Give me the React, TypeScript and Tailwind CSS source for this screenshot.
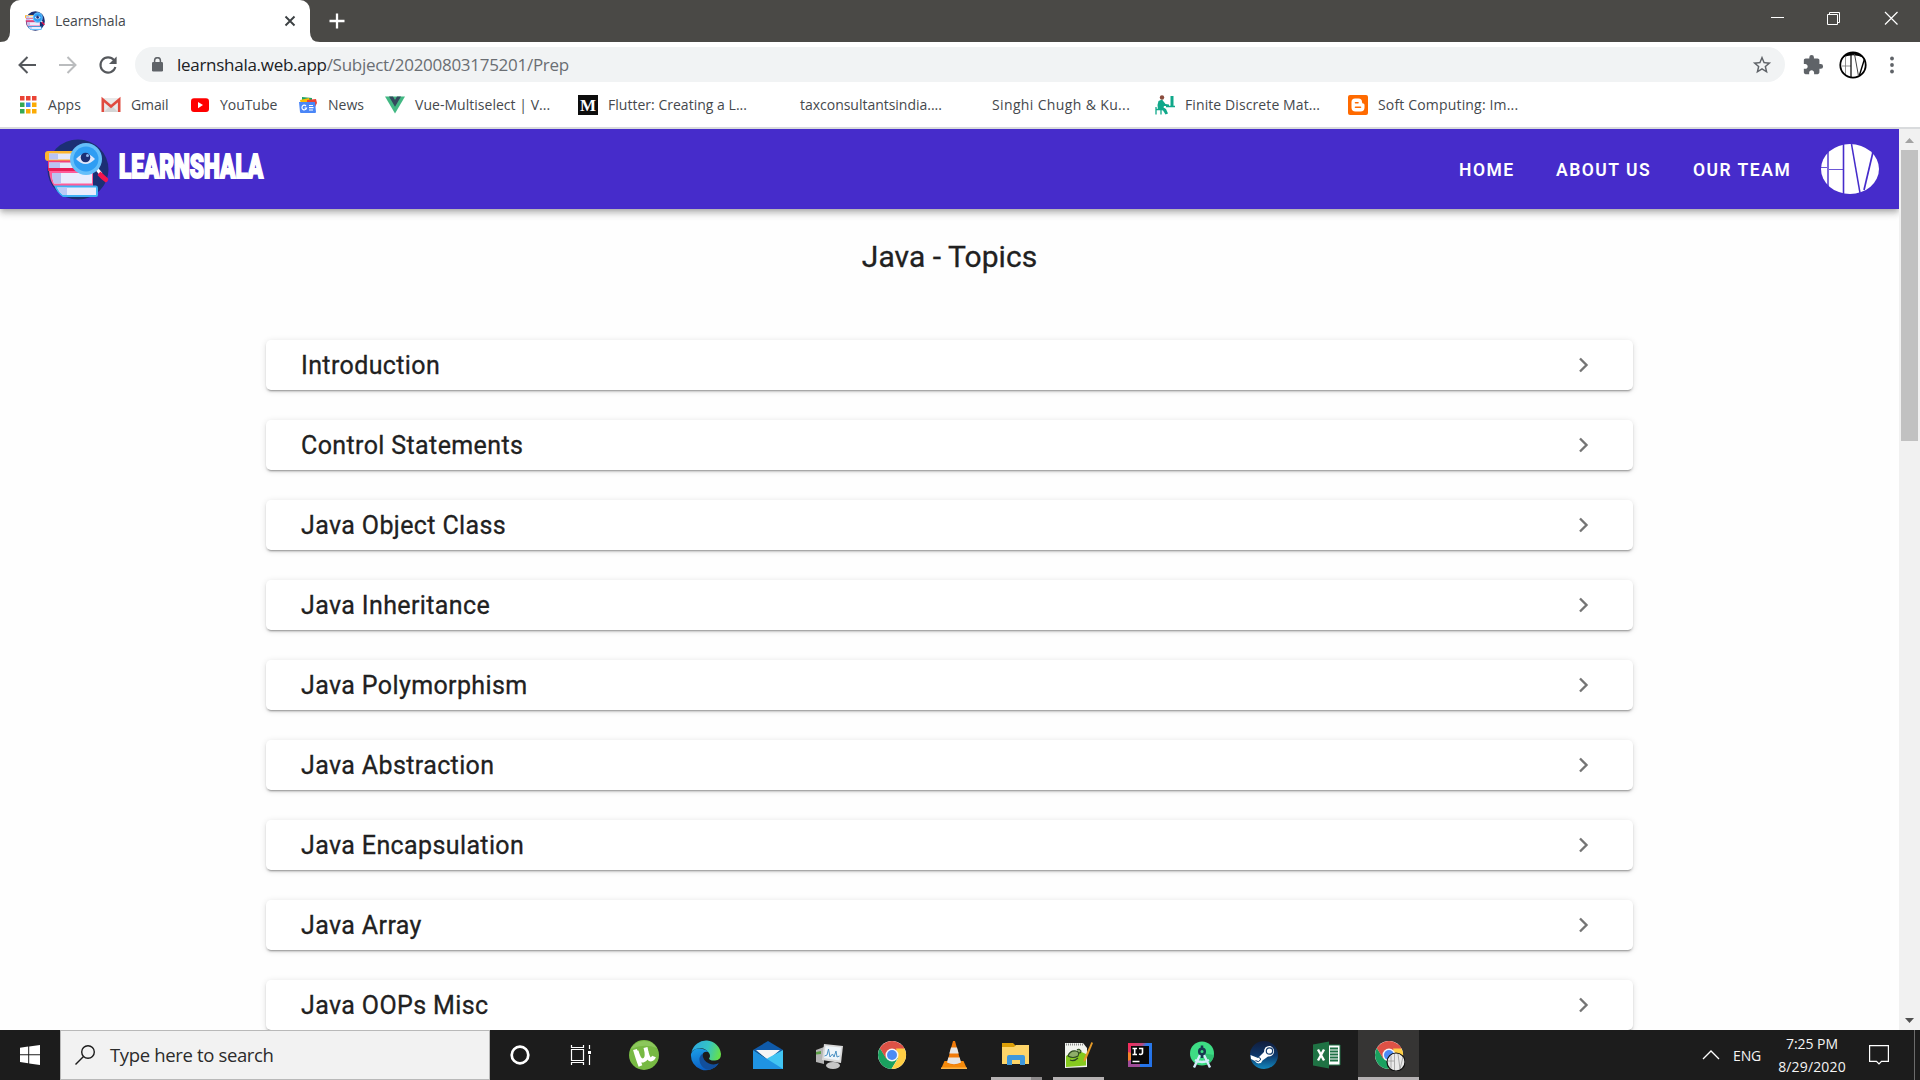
import React from "react";

const segoe = "font-['Open_Sans',sans-serif]";

function BookLogo({ className }: { className: string }) {
  return (
    <svg viewBox="0 0 64 61" className={className} preserveAspectRatio="none">
      <defs>
        <clipPath id="bookround">
          <path d="M0 10H30V58H16Q6 50 4 36L0 20Z M16 40H60V61H16Z" />
        </clipPath>
      </defs>
      <ellipse cx="33" cy="30.500" rx="30.500" ry="30" fill="#1c2f74" />
      <g clipPath="url(#bookround)">
        <rect x="0" y="12" width="32" height="10" rx="3" fill="#fdb62f" />
        <rect x="4" y="14.500" width="28" height="6" fill="#e4e9fb" />
        <rect x="4" y="14.500" width="9" height="6" fill="#b9c4f2" />
        <rect x="3" y="21.500" width="30" height="10" fill="#f2417d" />
        <rect x="4" y="23.500" width="30" height="5.500" fill="#e4e9fb" />
        <rect x="4" y="23.500" width="11" height="5.500" fill="#b9c4f2" />
        <rect x="3" y="29" width="36" height="3" fill="#e81e56" />
      </g>
      <path d="M4 32H48V47H9Q5 42 4 32Z" fill="#ff5c9a" />
      <path d="M7 34H47V44.500H9Q7 40 7 34Z" fill="#e9edfd" />
      <path d="M7 34H16V44.500H9Q7 40 7 34Z" fill="#b9c4f2" />
      <path d="M9 46.500H51Q53 46.500 53 49V56Q53 58 51 58H18Q12 54 9 46.500Z" fill="#3fb1f5" />
      <path d="M12 48.500H51V56H18Q14 53 12 48.500Z" fill="#e9edfd" />
      <path d="M12 48.500H22V56H18Q14 53 12 48.500Z" fill="#bccbf7" />
      <path d="M51 29L56 35" stroke="#fff" strokeWidth="3.500" />
      <path d="M55.500 33.500L62.500 40Q62 43 60.500 42.500Q56 39 53.500 36Z" fill="#f3164e" stroke="#f3164e" strokeWidth="1.500" />
      <circle cx="41" cy="20" r="16" fill="#65bffa" />
      <circle cx="41" cy="20" r="12.500" fill="#2f9df3" />
      <path d="M31 20Q40.500 9.500 50 20Q40.500 30 31 20Z" fill="#dfe7fb" />
      <circle cx="40.500" cy="18.500" r="4.800" fill="#1c2f74" />
      <circle cx="42.500" cy="16.500" r="1.500" fill="#8fb6ee" />
    </svg>
  );
}

const bookmarks = [
  { label: "Apps", w: "w-[83px]", t: "tracking-[0.1px]", icon: "apps" },
  { label: "Gmail", w: "w-[89px]", t: "tracking-[-0.1px]", icon: "gmail" },
  { label: "YouTube", w: "w-[108px]", t: "tracking-[-0.05px]", icon: "youtube" },
  { label: "News", w: "w-[87px]", t: "tracking-[0px]", icon: "news" },
  { label: "Vue-Multiselect | V...", w: "w-[193px]", t: "tracking-[0.03px]", icon: "vue" },
  { label: "Flutter: Creating a L...", w: "w-[192px]", t: "tracking-[0.02px]", icon: "medium" },
  { label: "taxconsultantsindia....", w: "w-[192px]", t: "tracking-[-0.02px]", icon: "" },
  { label: "Singhi Chugh & Ku...", w: "w-[193px]", t: "tracking-[0.36px]", icon: "" },
  { label: "Finite Discrete Mat...", w: "w-[193px]", t: "tracking-[0.1px]", icon: "finite" },
  { label: "Soft Computing: Im...", w: "w-[180px]", t: "tracking-[0.17px]", icon: "blogger" },
];

function BookmarkIcon({ name }: { name: string }) {
  const cls = "size-5 shrink-0";
  switch (name) {
    case "apps":
      return (
        <svg viewBox="0 0 20 20" className={cls}>
          {[2, 8, 14].map((x) => <rect key={x} x={x} y="1" width="4.500" height="4.500" fill="#ea4335" />)}
          <rect x="2" y="7.500" width="4.500" height="4.500" fill="#34a853" />
          <rect x="8" y="7.500" width="4.500" height="4.500" fill="#4285f4" />
          <rect x="14" y="7.500" width="4.500" height="4.500" fill="#fbab05" />
          <rect x="2" y="14" width="4.500" height="4.500" fill="#34a853" />
          <rect x="8" y="14" width="4.500" height="4.500" fill="#fbab05" />
          <rect x="14" y="14" width="4.500" height="4.500" fill="#fbab05" />
        </svg>
      );
    case "gmail":
      return (
        <svg viewBox="0 0 20 20" className={cls}>
          <rect x="1" y="3" width="18" height="14" rx="1.500" fill="#e9e9e9" />
          <path d="M3 17L10 10L17 17Z" fill="#d4d4d4" />
          <path d="M1.800 17V4.500L10 11.500L18.200 4.500V17" fill="none" stroke="#e04a3f" strokeWidth="2.600" />
        </svg>
      );
    case "youtube":
      return (
        <svg viewBox="0 0 20 20" className={cls}>
          <rect x="1" y="3.200" width="18" height="13.800" rx="3" fill="#f00" />
          <path d="M8 7L13 10.100L8 13.200Z" fill="#fff" />
        </svg>
      );
    case "news":
      return (
        <svg viewBox="0 0 20 20" className={cls}>
          <path d="M4 2L14 3V9H4Z" fill="#1fa463" />
          <path d="M2 5L11 3L13 9H3Z" fill="#fbbc04" />
          <path d="M9 5L18 4L19 8L17 12H9Z" fill="#ea4335" />
          <path d="M1 7H17L18 17Q18 18 17 18H3Q2 18 2 17Z" fill="#4a86f7" />
          <path d="M8 11A2.300 2.300 0 1 0 8.500 13H6.500M11 10.500H15M11 12.700H15.500M11 15H15" fill="none" stroke="#fff" strokeWidth="1.200" />
        </svg>
      );
    case "vue":
      return (
        <svg viewBox="0 0 20 20" className={cls}>
          <path d="M0 1.500H20L10 18.500Z" fill="#42b883" />
          <path d="M4 1.500H8L10 5L12 1.500H16L10 11.800Z" fill="#35495e" />
        </svg>
      );
    case "medium":
      return (
        <span className="flex size-5 shrink-0 items-center justify-center bg-[#0d0d0d] font-['Liberation_Serif',serif] text-[17px] leading-none font-bold text-white">
          M
        </span>
      );
    case "finite":
      return (
        <svg viewBox="0 0 20 20" className={cls}>
          <circle cx="7" cy="2.500" r="2.200" fill="#8a4b3c" />
          <path d="M3.500 6L7 4.500L10.500 9L14 9.500V11L9 11L8.500 12.500L11 14L13 18.500L10.500 19.500L8 15.500L3 14.500L2.500 10Z" fill="#10a88a" />
          <path d="M11 11.500H20M1 12V19.500M1 14.500H6V19.500" fill="none" stroke="#10a88a" strokeWidth="1.300" />
          <path d="M17 1V11" stroke="#10a88a" strokeWidth="3" />
        </svg>
      );
    case "blogger":
      return (
        <svg viewBox="0 0 20 20" className={cls}>
          <rect width="20" height="20" rx="2" fill="#ff6a00" />
          <path d="M7 3.500H10.500Q14 3.500 14 7Q14 8.500 15.300 8.500Q16.500 8.500 16.500 10V12.500Q16.500 16.500 12.500 16.500H7.500Q3.500 16.500 3.500 12.500V7Q3.500 3.500 7 3.500Z" fill="#fff" />
          <path d="M7.500 7.700H10M7.500 12.300H12.500" stroke="#ff6a00" strokeWidth="1.600" strokeLinecap="round" />
        </svg>
      );
    default:
      return <span className={cls} />;
  }
}

function TabStrip() {
  return (
    <div className="flex h-[42px] justify-between bg-[#4a4946]">
      <div className="flex">
        <svg viewBox="0 0 10 10" className="size-[10px] self-end"><path d="M10 0V10H0Q10 10 10 0Z" fill="#fff" /></svg>
        <div className="flex w-[300px] items-center rounded-t-[10px] bg-white pl-[15px]">
          <BookLogo className="h-5 w-5" />
          <span className={`${segoe} ml-[10px] w-[229px] pb-[2px] text-[14px] tracking-[-0.1px] text-[#45494d]`}>Learnshala</span>
          <svg viewBox="0 0 12 12" className="size-3"><path d="M1.500 1.500L10.500 10.500M10.500 1.500L1.500 10.500" stroke="#3c4043" strokeWidth="1.900" /></svg>
        </div>
        <svg viewBox="0 0 10 10" className="size-[10px] self-end"><path d="M0 0V10H10Q0 10 0 0Z" fill="#fff" /></svg>
        <svg viewBox="0 0 16 16" className="mt-[13px] ml-[9px] size-4"><path d="M8 .500V15.500M.500 8H15.500" stroke="#fff" strokeWidth="2.300" /></svg>
      </div>
      <svg viewBox="0 0 160 42" className="h-[42px] w-40" fill="none" stroke="#fff">
        <path d="M11 17.500H24" />
        <path d="M67.500 14.500H77.500V24.500H67.500ZM69.500 14.500V12.500H79.500V22.500H77.500" />
        <path d="M125 12L137.500 24.500M137.500 12L125 24.500" strokeWidth="1.200" />
      </svg>
    </div>
  );
}

function Toolbar() {
  return (
    <div className="flex h-[45px] items-center bg-white pl-[17px]">
      <svg viewBox="0 0 20 20" className="size-5" fill="none" stroke="#55585c" strokeWidth="2"><path d="M19 10H3M10.500 2L2.500 10L10.500 18" /></svg>
      <svg viewBox="0 0 20 20" className="ml-[21px] size-5" fill="none" stroke="#babcbe" strokeWidth="2"><path d="M1 10H17M9.500 2L17.500 10L9.500 18" /></svg>
      <svg viewBox="0 0 20 20" className="ml-5 size-5" fill="none">
        <path d="M16 5.200A7.600 7.600 0 1 0 17.400 12" stroke="#55585c" strokeWidth="2.100" />
        <path d="M18.600 1.500V9H11Z" fill="#55585c" />
      </svg>
      <div className="ml-[17px] flex h-[35px] w-[1650px] items-center rounded-full bg-[#f1f3f4] pl-[17px]">
        <svg viewBox="0 0 11 15" className="h-[15px] w-[11px]">
          <rect y="5" width="11" height="9.500" rx="1.300" fill="#5f6368" />
          <path d="M2.600 6V3.600A2.900 2.900 0 0 1 8.400 3.600V6" fill="none" stroke="#5f6368" strokeWidth="1.500" />
        </svg>
        <span className={`${segoe} ml-[14px] w-[1574px] text-[17px] tracking-[-0.28px] whitespace-nowrap text-[#6a6e73]`}>
          <span className="text-[#202124]">learnshala.web.app</span>/Subject/20200803175201/Prep
        </span>
        <svg viewBox="0 0 24 24" className="size-[22px] shrink-0" fill="#5f6368">
          <path d="M22 9.240l-7.190-.62L12 2 9.190 8.630 2 9.240l5.460 4.730L5.820 21 12 17.270 18.180 21l-1.630-7.030L22 9.240zM12 15.400l-3.760 2.270 1-4.280-3.320-2.880 4.380-.38L12 6.100l1.710 4.040 4.380.38-3.320 2.880 1 4.280L12 15.400z" />
        </svg>
      </div>
      <svg viewBox="0 0 24 24" className="ml-[17px] size-[22px]" fill="#5f6368">
        <path d="M20.500 11H19V7c0-1.100-.9-2-2-2h-4V3.500a2.500 2.500 0 0 0-5 0V5H4c-1.100 0-1.990.9-1.990 2v3.800H3.500c1.490 0 2.700 1.210 2.700 2.700s-1.210 2.700-2.700 2.700H2V20c0 1.100.9 2 2 2h3.800v-1.500c0-1.490 1.210-2.700 2.700-2.700s2.700 1.210 2.700 2.700V22H17c1.100 0 2-.9 2-2v-4h1.500a2.500 2.500 0 0 0 0-5z" />
      </svg>
      <svg viewBox="0 0 28 28" className="ml-[15px] size-7" fill="none" stroke="#000">
        <circle cx="14" cy="14" r="12.700" fill="#fff" strokeWidth="1.800" />
        <path d="M4 6Q14 -2 24 6Q14 1.500 4 6Z" fill="#000" />
        <path d="M3 15H12M6.500 5V23" stroke="#777" strokeWidth=".8" />
        <path d="M12 3V26" strokeWidth="1.200" />
        <path d="M15.500 3L19.500 25" stroke="#444" strokeWidth="1" />
        <path d="M20.500 24L25.500 8" strokeWidth="1.400" />
      </svg>
      <svg viewBox="0 0 6 20" className="ml-[22px] h-5 w-[6px]" fill="#5f6368">
        <circle cx="3" cy="3.500" r="1.900" /><circle cx="3" cy="10" r="1.900" /><circle cx="3" cy="16.500" r="1.900" />
      </svg>
    </div>
  );
}

function Bookmarks() {
  return (
    <div className="flex h-[42px] items-center border-b-2 border-[#d9dbdd] bg-white pb-[4px] pl-[18px]">
      {bookmarks.map((b) => (
        <div key={b.label} className={`flex shrink-0 items-center gap-[10px] ${b.w}`}>
          <BookmarkIcon name={b.icon} />
          <span className={`${segoe} pb-[2px] text-[14px] whitespace-nowrap text-[#45494d] ${b.t}`}>{b.label}</span>
        </div>
      ))}
    </div>
  );
}

function SiteHeader() {
  return (
    <header className="flex h-20 shrink-0 items-center bg-[#462ccb] pl-[45px] text-white shadow-[0_2px_5px_-1px_rgba(0,0,0,0.2),0_5px_6px_0_rgba(0,0,0,0.14),0_1px_12px_0_rgba(0,0,0,0.12)]">
      <BookLogo className="h-[61px] w-16" />
      <div className="ml-[10px] w-[1339px] pb-[6px]">
        <span className="inline-block origin-left scale-x-[0.664] font-['Roboto',sans-serif] text-[34px] leading-[48px] font-black [-webkit-text-stroke:2px_white]">LEARNSHALA</span>
      </div>
      <nav className="flex w-[363px] pt-[2px] pl-px font-['Roboto',sans-serif] text-[17.5px] font-semibold tracking-[1.5px] whitespace-nowrap">
        <span className="w-[97px]">HOME</span>
        <span className="w-[137px]">ABOUT US</span>
        <span>OUR TEAM</span>
      </nav>
      <svg viewBox="0 0 58 50" className="h-[50px] w-[58px]" stroke="#462ccb">
        <ellipse cx="29" cy="25" rx="29" ry="25" fill="#fff" stroke="none" />
        <g fill="none">
          <path d="M7 4V44" strokeWidth="1.400" />
          <path d="M22.500 0V50" strokeWidth="1.600" />
          <path d="M0 23.500H6M8 25.500H22" strokeWidth=".8" />
          <path d="M30.500 0L39 49" strokeWidth="1.500" />
          <path d="M52 8L43 46" strokeWidth="1.700" />
        </g>
      </svg>
    </header>
  );
}

const topics = [
  "Introduction",
  "Control Statements",
  "Java Object Class",
  "Java Inheritance",
  "Java Polymorphism",
  "Java Abstraction",
  "Java Encapsulation",
  "Java Array",
  "Java OOPs Misc",
];

function Page() {
  return (
    <main className="flex w-[1899px] flex-col overflow-hidden bg-[#fefefe]">
      <SiteHeader />
      <h1 className="mt-[28px] shrink-0 text-center font-['Roboto',sans-serif] text-[30px] leading-10 tracking-[0.05px] text-[#212121] [-webkit-text-stroke:0.3px_#212121]">Java - Topics</h1>
      <div className="mt-[63px] ml-[266px] flex w-[1367px] flex-col gap-[30px]">
        {topics.map((t) => (
          <div
            key={t}
            className="flex h-[50px] shrink-0 items-center justify-between rounded-[5px] bg-white pr-[38px] pl-[35px] shadow-[0_3px_1px_-2px_rgba(0,0,0,0.2),0_2px_2px_0_rgba(0,0,0,0.14),0_1px_6px_0_rgba(0,0,0,0.12)]"
          >
            <span className="pt-[2px] font-['Roboto',sans-serif] text-[25px] leading-10 tracking-[0.38px] text-[#212121] [-webkit-text-stroke:0.3px_#212121]">{t}</span>
            <svg viewBox="0 0 24 24" className="size-[24px]" fill="none" stroke="#757575" strokeWidth="2.400"><path d="M9 5.500L15.500 12L9 18.500" /></svg>
          </div>
        ))}
      </div>
    </main>
  );
}

function Scrollbar() {
  return (
    <div className="flex w-[21px] flex-col items-center bg-[#f1f1f1]">
      <svg viewBox="0 0 21 21" className="h-[21px] w-[21px] shrink-0"><path d="M6 14L10.500 9L15 14Z" fill="#a3a3a3" /></svg>
      <div className="h-[291px] w-[17px] bg-[#c1c1c1]" />
      <svg viewBox="0 0 21 21" className="mt-auto h-[21px] w-[21px] shrink-0"><path d="M6 9L10.500 14L15 9Z" fill="#505050" /></svg>
    </div>
  );
}

function ChromeBody() {
  return (
    <>
      <circle cx="16" cy="16" r="14" fill="#fff" />
      <path d="M16 16L3.880 9A14 14 0 0 1 28.120 9Z" fill="#de5246" />
      <path d="M3.880 9A14 14 0 0 0 15.500 30L22 19L16 16L10.500 19.500Z" fill="#1aa15f" />
      <path d="M28.120 9A14 14 0 0 1 15.500 30L22 19.500L20 9Z" fill="#ffce44" />
      <path d="M3.880 9L10 19.500L16 9.500H28.400L26 6L14 4Z" fill="#de5246" />
      <circle cx="16" cy="16" r="6.500" fill="#f6f6f6" />
      <circle cx="16" cy="16" r="5" fill="#4c8bf5" />
    </>
  );
}

function TaskIcon({ name }: { name: string }) {
  const p = { viewBox: "0 0 32 32", className: "size-8" };
  switch (name) {
    case "cortana":
      return <svg {...p}><circle cx="16" cy="16" r="8.300" fill="none" stroke="#fff" strokeWidth="2.700" /></svg>;
    case "taskview":
      return (
        <svg {...p} fill="none" stroke="#fff" strokeWidth="1.200">
          <path d="M5.500 10.500H17.500V21.500H5.500ZM5.500 6V8.500H17.500V6M5.500 26V23.500H17.500V26M23.500 6V10M23.500 16V26" />
          <rect x="22" y="12" width="3" height="3" fill="#fff" stroke="none" />
        </svg>
      );
    case "utorrent":
      return (
        <svg {...p}>
          <circle cx="16" cy="16" r="15" fill="#77b943" />
          <path d="M3 10A15 15 0 0 1 29 9Q16 4 3 10Z" fill="#8cc75c" />
          <path d="M7 10.500Q10 21 12.500 27M8.500 12Q11.500 22 15 21.500Q19.500 20.500 18.500 13L17.500 8.500M18.500 13Q20.500 22 24 20Q25.500 19 26 17.500" fill="none" stroke="#fff" strokeWidth="4" />
        </svg>
      );
    case "edge":
      return (
        <svg {...p}>
          <defs>
            <linearGradient id="eg1" x1="0" y1=".3" x2="1" y2=".5"><stop stopColor="#2ca7e0" /><stop offset=".55" stopColor="#35c4c4" /><stop offset="1" stopColor="#66e04a" /></linearGradient>
            <linearGradient id="eg2" x1="0" y1="0" x2=".3" y2="1"><stop stopColor="#1ba0e8" /><stop offset="1" stopColor="#0b5fc4" /></linearGradient>
          </defs>
          <path d="M1.500 13A15 15 0 0 1 31 15Q31 21 25 21.500Q20 22 19 19.500Q21 17 19 14Q15 8 8 9.500Q3 10.500 1.500 13Z" fill="url(#eg1)" />
          <path d="M1 15Q3 9 10 9.500Q16 10 18.500 13Q13 11.500 12 17Q12 24 18 26.500Q25 28 28.500 24.500A15 15 0 0 1 1 15Z" fill="url(#eg2)" />
          <path d="M12.500 14.500Q8 18 10 24Q13 30.500 19 30.800Q25.500 29.500 28.800 24.300Q24 26.500 19 24.500Q12.500 21.500 12.500 14.500Z" fill="#124f9c" />
        </svg>
      );
    case "mail":
      return (
        <svg {...p}>
          <path d="M1 11L16 2L31 11L16 20Z" fill="#0f5aa9" />
          <path d="M4 11H28L16 21Z" fill="#f5f5f5" />
          <path d="M16 19L31 11V30H1Z" fill="#41c5f3" />
          <path d="M1 11L31 30H1Z" fill="#1f93e2" />
        </svg>
      );
    case "monitor":
      return (
        <svg {...p}>
          <path d="M2 11L10 8V25L2 23Z" fill="#b5b5b5" /><path d="M2 13L7 12V15L2 15.500Z" fill="#5a9e45" />
          <ellipse cx="19" cy="26.500" rx="7" ry="3.500" fill="#c6c6c6" />
          <path d="M10 5L29 7L27 24L8 21Z" fill="#d8d8d8" />
          <path d="M11.500 7L27 8.500L25.500 21.500L10 19Z" fill="#eef5fa" />
          <path d="M10.500 17L13 16L14.500 10L16 18L18.500 15L20 18L22 12L23 18L25.500 17" fill="none" stroke="#4a91c4" />
        </svg>
      );
    case "chrome":
      return <svg {...p}><ChromeBody /></svg>;
    case "vlc":
      return (
        <svg {...p}>
          <path d="M6.500 22H25.500L29 30H3Z" fill="#f58a0b" />
          <path d="M15 2H17L23 24Q16 28 9 24Z" fill="#f07b0a" />
          <path d="M13 8.500H19L20.700 14.500H11.300Z" fill="#e6e6e6" />
          <path d="M10.300 18.500H21.700L23 23.500Q16 27 9 23.500Z" fill="#e6e6e6" />
          <path d="M3 28.500H29V30H3Z" fill="#fcb344" />
        </svg>
      );
    case "explorer":
      return (
        <svg {...p}>
          <path d="M2 4H13L15.500 6.500V10H2Z" fill="#dd9f07" />
          <path d="M2 8H14L16 6H29V25H2Z" fill="#fed569" />
          <path d="M7 26V18Q7 16 9 16H23Q25 16 25 18V26H20V21H12V26Z" fill="#3f98dc" />
        </svg>
      );
    case "notepad":
      return (
        <svg {...p}>
          <path d="M3 4H21L25 9V28L3 29Z" fill="#f1f3ee" />
          <path d="M4 17Q15 9 24 15V26.500L4 28Z" fill="#86c91f" />
          <path d="M4 5.500H22" stroke="#888" strokeWidth="2" strokeDasharray="1 1" />
          <path d="M6 17Q8 11 14 12Q18 13 16 17Q11 20 6 17ZM15 11Q17 9 19 12Q19 14 17 14M8 21Q12 23 16 19" fill="#8fae6a" stroke="#2d4a20" strokeWidth="1.100" />
          <path d="M29.500 3L31 4L24 21L21.500 23L22 19.500Z" fill="#e59a28" />
        </svg>
      );
    case "intellij":
      return (
        <svg {...p}>
          <defs><linearGradient id="ij" x1="0" y1="0" x2="1" y2=".6"><stop stopColor="#fe2857" /><stop offset=".45" stopColor="#b8487c" /><stop offset=".6" stopColor="#2b7bea" /><stop offset="1" stopColor="#2472e8" /></linearGradient></defs>
          <rect x="4" y="4" width="24" height="24" fill="url(#ij)" />
          <path d="M4 13L7 14V21L4 22Z" fill="#f58529" />
          <path d="M4 22L7 21V25H16V28H4Z" fill="#a04c98" />
          <rect x="7" y="7" width="18" height="18" fill="#080808" />
          <path d="M8.500 9.500H13M10.700 9V16M8.500 15.500H13M15 9.500H18.500V13.500Q18.500 15.500 16.500 15.500L15 15" fill="none" stroke="#fff" strokeWidth="1.600" />
          <path d="M8.500 22.500H15.500" stroke="#fff" strokeWidth="1.500" />
        </svg>
      );
    case "android":
      return (
        <svg {...p}>
          <circle cx="16" cy="14.500" r="12" fill="#3ddc84" />
          <path d="M16 14L28 16A12 12 0 0 1 20 26Z" fill="#2fbf71" />
          <path d="M14.500 15L8 28.500M17.500 15L24 28.500M9 21Q16 25 23 21" fill="none" stroke="#d5ecfb" strokeWidth="2.400" />
          <circle cx="16" cy="12.500" r="2.800" fill="#3ddc84" stroke="#17394f" strokeWidth="2.500" />
          <path d="M16 6.500V9M16 16V19" stroke="#17394f" strokeWidth="2.500" />
        </svg>
      );
    case "steam":
      return (
        <svg {...p}>
          <defs><linearGradient id="st" x1="0" y1="0" x2="0" y2="1"><stop stopColor="#111d3c" /><stop offset=".5" stopColor="#0d3669" /><stop offset="1" stopColor="#1287bd" /></linearGradient></defs>
          <circle cx="16" cy="16" r="14" fill="url(#st)" />
          <path d="M2.500 16L10 19L16 13Q16 7 21.500 7A5 5 0 1 1 20 17.500L14.500 21.500A4 4 0 0 1 7 22L3 20Z" fill="#fff" />
          <circle cx="21.500" cy="12" r="3.200" fill="#fff" stroke="#163d6c" strokeWidth="1.200" />
          <path d="M7.500 21.500Q10.500 24 12.500 21Q13 18.500 10.500 18.500" fill="none" stroke="#163d6c" strokeWidth="1" />
        </svg>
      );
    case "excel":
      return (
        <svg {...p}>
          <path d="M18 6H30V26H18Z" fill="#fff" stroke="#1e7145" />
          <path d="M20 9.500H28M20 12.500H28M20 15.500H28M20 18.500H28M20 21.500H28" stroke="#1e7145" strokeWidth="1.800" />
          <path d="M3 5.500L19 2.500V29.500L3 26.500Z" fill="#1f7244" />
          <path d="M8 10.500L14 21.500M14 10.500L8 21.500" stroke="#fff" strokeWidth="2.400" />
        </svg>
      );
    default:
      return (
        <svg {...p}>
          <ChromeBody />
          <circle cx="23" cy="23" r="9" fill="#e9e9e9" stroke="#111" strokeWidth="1.200" />
          <path d="M18 17V29M21.500 15V31M15 22H21M25 15L27 30M30 18L27 30" stroke="#999" strokeWidth=".8" />
        </svg>
      );
  }
}

const apps = ["cortana", "taskview", "utorrent", "edge", "mail", "monitor", "chrome", "vlc", "explorer", "notepad", "intellij", "android", "steam", "excel", "chromeprofile"];

function Taskbar() {
  return (
    <div className="flex h-[50px] bg-[#1c1c1c] text-[#f4f4f4]">
      <div className="flex w-[60px] items-center justify-center">
        <svg viewBox="0 0 20 20" className="size-5" fill="#fff"><path d="M0 2.800L8.200 1.600V9.300H0ZM9.200 1.400L20 0V9.300H9.200ZM0 10.300H8.200V18.200L0 17ZM9.200 10.300H20V20L9.200 18.400Z" /></svg>
      </div>
      <div className="flex w-[430px] items-center border border-[#b9b9b9] bg-[#f2f2f2] pl-[14px]">
        <svg viewBox="0 0 20 20" className="size-5" fill="none" stroke="#1c1c1c" strokeWidth="1.400"><circle cx="13" cy="7" r="6.300" /><path d="M8.500 11.500L.500 19.500" /></svg>
        <span className={`${segoe} ml-[15px] text-[18.500px] tracking-[-0.35px] text-[#2b2b2b]`}>Type here to search</span>
      </div>
      <div className="flex">
        {apps.map((a) => (
          <div key={a} className={a === "chromeprofile" ? "relative flex w-[61px] items-center justify-center bg-[#363534]" : "relative flex w-[62px] items-center justify-center pr-[3px]"}>
            <TaskIcon name={a} />
            {a === "explorer" && <div className="absolute bottom-0 left-[5px] flex h-[3px] w-[51px] bg-[#8c898a]"><div className="w-10 bg-[#b5b1b2]" /></div>}
            {a === "notepad" && <div className="absolute bottom-0 left-[5px] h-[3px] w-[51px] bg-[#b5b1b2]" />}
            {a === "chromeprofile" && <div className="absolute bottom-0 left-0 h-[3px] w-full bg-[#b5b1b2]" />}
          </div>
        ))}
      </div>
      <div className={`${segoe} ml-auto flex items-center text-[14px]`}>
        <svg viewBox="0 0 18 10" className="h-[10px] w-[18px]" fill="none" stroke="#fff" strokeWidth="1.300"><path d="M1 9L9 1L17 9" /></svg>
        <span className="ml-[13px] w-[29px] tracking-[-0.1px]">ENG</span>
        <div className="ml-[12px] w-[76px] text-center leading-[23px] whitespace-nowrap">
          <div className="tracking-[-0.05px]">7:25 PM</div>
          <div className="tracking-[0.15px]">8/29/2020</div>
        </div>
        <svg viewBox="0 0 20 20" className="ml-[19px] size-5" fill="none" stroke="#fff" strokeWidth="1.200"><path d="M.600 .600H19.400V16.400H12.500L10 19L7.500 16.400H.600Z" /></svg>
        <div className="ml-[25px] h-full w-px bg-[#6b6b6b]" />
        <div className="w-[5px]" />
      </div>
    </div>
  );
}

export default function App() {
  return (
    <div className="flex h-[1080px] w-[1920px] flex-col overflow-hidden bg-white">
      <TabStrip />
      <Toolbar />
      <Bookmarks />
      <div className="flex h-[901px] overflow-hidden">
        <Page />
        <Scrollbar />
      </div>
      <Taskbar />
    </div>
  );
}
